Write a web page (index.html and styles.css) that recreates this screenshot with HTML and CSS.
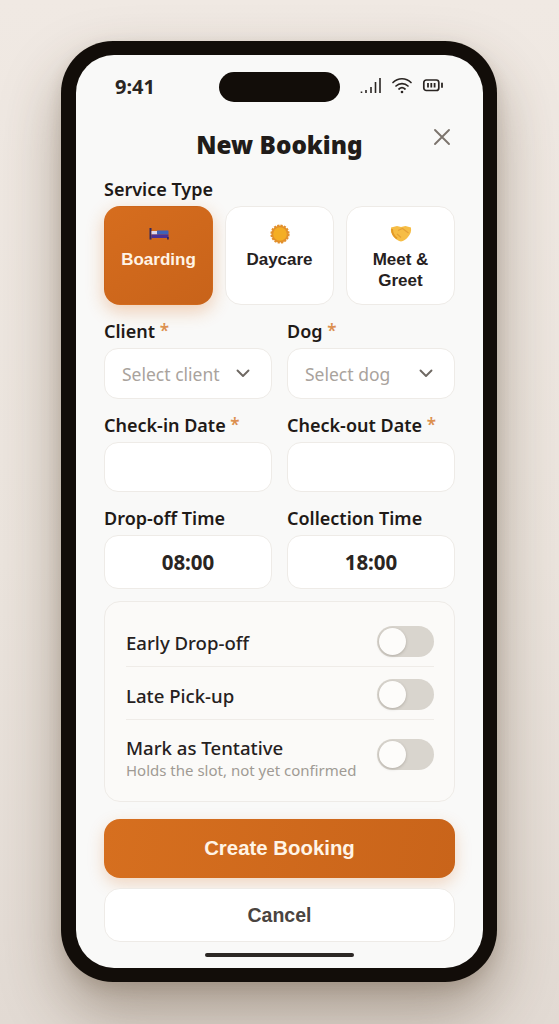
FILE: index.html
```html
<!DOCTYPE html>
<html lang="en">
<head>
<meta charset="utf-8">
<title>New Booking</title>
<link rel="stylesheet" href="styles.css">
</head>
<body>
<div class="phone">
  <div class="screen">
    <div class="island"></div>
    <div class="status">
      <span class="time">9:41</span>
      <div class="status-icons">
        <svg width="22" height="16" viewBox="0 0 22 16" class="ic"><g stroke="#2a2522" stroke-width="1.600"><path d="M1.500 14.500v1.500"/><path d="M6 13v3"/><path d="M11 10v6"/><path d="M15.500 5v11"/><path d="M20 1v15"/></g></svg>
        <svg width="22" height="18" viewBox="0 0 22 18" class="ic"><g fill="none" stroke="#2a2522" stroke-width="1.700" stroke-linecap="round"><path d="M2 6.500c5-5 13-5 18 0"/><path d="M5 10c3.300-3.200 8.700-3.200 12 0"/><path d="M8 13c1.700-1.500 4.300-1.500 6 0"/></g><circle cx="11" cy="16" r="1.300" fill="#2a2522"/></svg>
        <svg width="22" height="14" viewBox="0 0 22 14" class="ic"><rect x="1.800" y="2" width="15" height="10.500" rx="2.500" fill="none" stroke="#2a2522" stroke-width="1.700"/><path d="M6 5v4.500M9.300 5v4.500M12.600 5v4.500" stroke="#2a2522" stroke-width="1.800"/><path d="M20 5.500v3.500" stroke="#2a2522" stroke-width="1.800" stroke-linecap="round"/></svg>
      </div>
    </div>

    <div class="head">
      <h1 class="title">New Booking</h1>
      <svg class="close" width="18" height="18" viewBox="0 0 18 18"><path d="M2 2l14 14M16 2L2 16" stroke="#7c746d" stroke-width="1.900" stroke-linecap="round"/></svg>
    </div>

    <div class="label service-label">Service Type</div>
    <div class="services">
      <div class="svc active">
        <svg class="emoji" width="20" height="20" viewBox="0 0 20 20"><rect x="0.500" y="4" width="2" height="11.500" fill="#33285f"/><rect x="2.500" y="7" width="6" height="3.500" fill="#dcd8ee"/><rect x="8" y="6.500" width="11.500" height="4" rx="0.500" fill="#3d62b8"/><rect x="2.500" y="10.500" width="17" height="3.500" fill="#4a3196"/><rect x="18" y="13" width="1.800" height="2.500" fill="#33285f"/></svg>
        <span>Boarding</span>
      </div>
      <div class="svc">
        <svg class="emoji" width="20" height="20" viewBox="0 0 20 20"><circle cx="10" cy="10" r="8.600" fill="#e2902c" stroke="#e2902c" stroke-width="2" stroke-dasharray="2.200 1.200"/><circle cx="10" cy="10" r="6.800" fill="#f4ae24"/></svg>
        <span>Daycare</span>
      </div>
      <div class="svc">
        <svg class="emoji" width="22" height="20" viewBox="0 0 22 20"><path d="M1 3.500l6-1.500 4 1 4.500-1L21 3.500c.5 4-.5 6.500-3 9.500-2 2.400-4.500 4-7 4.500-2.500-.5-5-2.100-7-4.500C1.500 10 .5 7.500 1 3.500z" fill="#f6bd45"/><path d="M2 5c0 4 2 7.500 5 9.500" stroke="#e39a26" stroke-width="2" fill="none"/><path d="M8 6.500l4.500-2 6 4.500M7 10l4 3.500" stroke="#e5a035" stroke-width="1.200" fill="none"/></svg>
        <span>Meet &amp; Greet</span>
      </div>
    </div>

    <div class="grid select-row">
      <div class="field">
        <div class="label">Client <i class="req">*</i></div>
        <div class="box box-select">
          <span class="ph">Select client</span>
          <svg width="14" height="9" viewBox="0 0 14 9"><path d="M1.500 1.500L7 7l5.500-5.500" fill="none" stroke="#6e6862" stroke-width="1.900" stroke-linecap="round" stroke-linejoin="round"/></svg>
        </div>
      </div>
      <div class="field">
        <div class="label">Dog <i class="req">*</i></div>
        <div class="box box-select">
          <span class="ph">Select dog</span>
          <svg width="14" height="9" viewBox="0 0 14 9"><path d="M1.500 1.500L7 7l5.500-5.500" fill="none" stroke="#6e6862" stroke-width="1.900" stroke-linecap="round" stroke-linejoin="round"/></svg>
        </div>
      </div>
    </div>

    <div class="grid date-row">
      <div class="field">
        <div class="label">Check-in Date <i class="req">*</i></div>
        <div class="box box-date"></div>
      </div>
      <div class="field">
        <div class="label">Check-out Date <i class="req">*</i></div>
        <div class="box box-date"></div>
      </div>
    </div>

    <div class="grid time-row">
      <div class="field">
        <div class="label">Drop-off Time</div>
        <div class="box box-time">08:00</div>
      </div>
      <div class="field">
        <div class="label">Collection Time</div>
        <div class="box box-time">18:00</div>
      </div>
    </div>

    <div class="options">
      <div class="opt opt-a"><span class="opt-name opt-low">Early Drop-off</span><span class="toggle toggle-low"></span></div>
      <div class="opt opt-b"><span class="opt-name opt-low">Late Pick-up</span><span class="toggle toggle-low"></span></div>
      <div class="opt opt-c">
        <div class="opt-text"><div class="opt-name">Mark as Tentative</div><div class="opt-sub">Holds the slot, not yet confirmed</div></div>
        <span class="toggle"></span>
      </div>
    </div>

    <div class="btn-primary">Create Booking</div>
    <div class="btn-cancel">Cancel</div>
    <div class="home"></div>
  </div>
</div>
</body>
</html>
```
FILE: styles.css
```css
* { box-sizing: border-box; }
html, body { margin: 0; height: 100%; }
body {
  width: 559px;
  height: 1024px;
  overflow: hidden;
  display: flex;
  align-items: flex-start;
  justify-content: flex-start;
  padding: 41px 0 0 61px;
  background: linear-gradient(180deg, #f0e9e3 0%, #ebe4dd 55%, #e2dad3 100%);
  font-family: "Noto Sans", sans-serif;
  color: #1f1a17;
}
.phone {
  width: 436px;
  height: 941px;
  background: #120d09;
  border-radius: 52px;
  padding: 14px 14px 14px 15px;
  box-shadow: 0 30px 60px rgba(70, 50, 25, 0.38), 0 6px 16px rgba(70, 50, 25, 0.14);
}
.screen {
  position: relative;
  height: 100%;
  background: #f9f9f8;
  border-radius: 38px;
  padding: 0 28px;
  overflow: hidden;
}
.island {
  position: absolute;
  left: 143px;
  top: 17px;
  width: 121px;
  height: 30px;
  border-radius: 15px;
  background: #120d09;
}
.status {
  height: 62px;
  padding: 19px 11px 0 11px;
  display: flex;
  justify-content: space-between;
  align-items: flex-start;
}
.time { font-size: 20px; font-weight: 700; line-height: 25px; color: #2a2522; }
.status-icons { display: flex; align-items: center; gap: 9px; height: 22px; }
.ic { display: block; }
.head { position: relative; height: 54px; padding-top: 7px; }
.title {
  margin: 0;
  text-align: center;
  font-size: 24.300px;
  font-weight: 900;
  line-height: 42px;
  height: 42px;
  color: #211c19;
}
.close { position: absolute; right: 4px; top: 11px; }
.label {
  font-size: 18px;
  font-weight: 600;
  line-height: 24px;
  color: #1f1a17;
  white-space: nowrap;
}
.service-label { height: 24px; margin-top: 6px; }
.req { font-style: normal; color: #dc9050; font-weight: 600; font-size: 17px; vertical-align: 1px; }
.services { display: grid; grid-template-columns: repeat(3, 109px); gap: 12px; margin-top: 5px; }
.svc {
  height: 99px;
  background: #fff;
  border: 1px solid #eeebe7;
  border-radius: 16px;
  padding-top: 17px;
  display: flex;
  flex-direction: column;
  align-items: center;
  text-align: center;
  font-family: "Liberation Sans", Arial, sans-serif;
  font-size: 17px;
  font-weight: 700;
  line-height: 21px;
  color: #26211e;
}
.svc span { margin-top: 5px; padding: 0 12px; }
.svc.active {
  background: linear-gradient(145deg, #d66d1e, #c8631a);
  border-color: transparent;
  color: #fff4e6;
  box-shadow: 0 6px 18px rgba(217, 112, 31, 0.32);
}
.emoji { display: block; }
.grid { display: grid; grid-template-columns: 168px 168px; column-gap: 15px; }
.select-row { margin-top: 14px; }
.date-row { margin-top: 14px; }
.time-row { margin-top: 14px; }
.field .label { height: 24px; margin-bottom: 5px; }
.box {
  background: #fff;
  border: 1px solid #eeebe7;
  border-radius: 14px;
}
.box-select {
  height: 51px;
  padding: 0 21px 0 17px;
  display: flex;
  align-items: center;
  justify-content: space-between;
}
.ph { font-size: 17.500px; color: #a9a39d; }
.box-date { height: 50px; }
.box-time {
  height: 54px;
  display: flex;
  align-items: center;
  justify-content: center;
  font-size: 20.500px;
  font-weight: 700;
  color: #2a2522;
}
.options {
  margin-top: 12px;
  height: 201px;
  padding: 12px 20px 0 21px;
  background: #fbfaf8;
  border: 1px solid #eeebe7;
  border-radius: 16px;
}
.opt { display: flex; align-items: center; justify-content: space-between; }
.opt-a, .opt-b { height: 53px; border-bottom: 1px solid #efece8; }
.opt-c { height: 68px; }
.opt-name { font-size: 18.600px; font-weight: 500; line-height: 24px; color: #26211e; }
.opt-low { margin-top: 6px; }
.opt-text { margin-top: 7px; }
.opt-sub { font-size: 15px; line-height: 20px; color: #a09a94; white-space: nowrap; }
.toggle {
  position: relative;
  width: 57px;
  height: 31px;
  border-radius: 16px;
  background: #d9d5ce;
  flex: none;
}
.toggle-low { margin-top: 2px; }
.toggle::after {
  content: "";
  position: absolute;
  left: 2px;
  top: 2px;
  width: 27px;
  height: 27px;
  border-radius: 50%;
  background: #fdfcfa;
  box-shadow: 0 1px 3px rgba(60, 50, 40, 0.25);
}
.btn-primary {
  margin-top: 17px;
  height: 59px;
  display: flex;
  align-items: center;
  justify-content: center;
  border-radius: 16px;
  background: linear-gradient(100deg, #d66f1f, #c9641a);
  box-shadow: 0 6px 16px rgba(217, 112, 31, 0.25);
  color: #fff4e6;
  font-family: "Liberation Sans", Arial, sans-serif;
  font-size: 20.400px;
  font-weight: 700;
}
.btn-cancel {
  margin-top: 10px;
  height: 54px;
  display: flex;
  align-items: center;
  justify-content: center;
  background: #fff;
  border: 1px solid #eeebe7;
  border-radius: 16px;
  color: #4a4440;
  font-family: "Liberation Sans", Arial, sans-serif;
  font-size: 19.500px;
  font-weight: 700;
}
.home {
  position: absolute;
  left: 129px;
  bottom: 11px;
  width: 149px;
  height: 4.500px;
  border-radius: 3px;
  background: #2c2825;
}
```
